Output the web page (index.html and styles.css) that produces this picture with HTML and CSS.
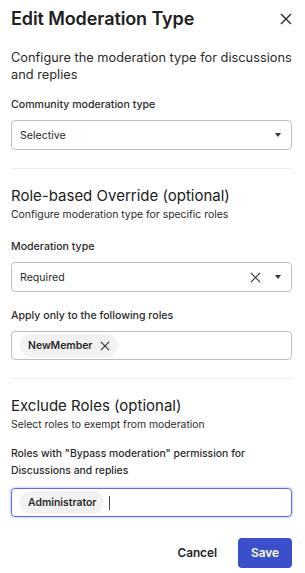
FILE: index.html
```html
<!DOCTYPE html>
<html lang="en">
  <head>
    <meta name="viewport" content="width=device-width, initial-scale=1" />
    <title>Edit Moderation Type</title>
    <link rel="stylesheet" href="styles.css">
  </head>
  <body>
    <div class="dialog">
      <div class="dialog-header">
        <h1 class="dialog-title">Edit Moderation Type</h1>
        <button class="icon-btn close-btn" aria-label="Close">
          <svg width="12" height="12" viewBox="0 0 12 12"><path d="M1 1L11 11M11 1L1 11" stroke="#2a2a2a" stroke-width="1.4" fill="none"/></svg>
        </button>
      </div>

      <p class="dialog-desc">Configure the moderation type for discussions and replies</p>

      <div class="field">
        <label class="field-label">Community moderation type</label>
        <div class="select-box">
          <span class="select-value">Selective</span>
          <span class="caret"></span>
        </div>
      </div>

      <hr class="divider">

      <h2 class="section-title">Role-based Override (optional)</h2>
      <p class="section-desc">Configure moderation type for specific roles</p>

      <div class="field">
        <label class="field-label">Moderation type</label>
        <div class="select-box">
          <span class="select-value">Required</span>
          <svg class="clear-icon" width="11" height="11" viewBox="0 0 12 12"><path d="M1 1L11 11M11 1L1 11" stroke="#333" stroke-width="1.3" fill="none"/></svg>
          <span class="caret"></span>
        </div>
      </div>

      <div class="field">
        <label class="field-label">Apply only to the following roles</label>
        <div class="tag-box">
          <span class="chip">NewMember
            <svg class="chip-x" width="10" height="10" viewBox="0 0 12 12"><path d="M1 1L11 11M11 1L1 11" stroke="#333" stroke-width="1.4" fill="none"/></svg>
          </span>
        </div>
      </div>

      <hr class="divider">

      <h2 class="section-title">Exclude Roles (optional)</h2>
      <p class="section-desc">Select roles to exempt from moderation</p>

      <div class="field field-tight">
        <label class="field-label">Roles with "Bypass moderation" permission for Discussions and replies</label>
        <div class="tag-box focused">
          <span class="chip">Administrator</span>
          <span class="cursor"></span>
        </div>
      </div>

      <div class="dialog-footer">
        <button class="btn btn-text">Cancel</button>
        <button class="btn btn-primary">Save</button>
      </div>
    </div>
  </body>
</html>
```

FILE: styles.css
```css
* {
    box-sizing: border-box;
}
body {
    margin: 0;
    background: #fff;
    font-family: Inter, "Noto Sans", sans-serif;
    color: #222;
}
.dialog {
    padding: 7px 13px 0 11px;
}
.dialog-header {
    display: flex;
    align-items: center;
    justify-content: space-between;
    height: 24px;
}
.dialog-title {
    margin: 0;
    font-size: 18px;
    font-weight: 600;
    line-height: 24px;
    color: #202020;
    letter-spacing: -0.1px;
}
.icon-btn {
    border: 0;
    background: none;
    padding: 0;
    display: flex;
}
.dialog-desc {
    margin: 18px 0 0;
    font-size: 12.8px;
    line-height: 17px;
    color: #2a2a2a;
}
.field {
    margin-top: 14px;
}
.field-label {
    display: block;
    font-size: 10.6px;
    font-weight: 500;
    line-height: 16px;
    color: #2a2a2a;
    margin-bottom: 7px;
}
.select-box {
    display: flex;
    align-items: center;
    height: 30px;
    padding: 0 10px 0 8px;
    border: 1px solid #bdbdbd;
    border-radius: 4px;
    font-size: 10.6px;
    color: #2a2a2a;
}
.select-value {
    flex: 1;
}
.clear-icon {
    margin-right: 14px;
}
.caret {
    width: 0;
    height: 0;
    border-left: 3.5px solid transparent;
    border-right: 3.5px solid transparent;
    border-top: 4px solid #333;
}
.divider {
    border: 0;
    border-top: 1px solid #ececec;
    margin: 18px 0 0;
}
.section-title {
    margin: 16px 0 0;
    font-size: 15px;
    font-weight: 400;
    line-height: 22px;
    color: #202020;
}
.section-desc {
    margin: 0;
    font-size: 10.4px;
    line-height: 16px;
    color: #2a2a2a;
}
.section-desc + .field {
    margin-top: 16px;
}
.field + .field {
    margin-top: 16px;
}
.field-tight .field-label {
    line-height: 17px;
    margin-bottom: 9px;
    font-size: 10.4px;
}
.section-desc + .field-tight {
    margin-top: 12px;
}
.tag-box {
    display: flex;
    align-items: center;
    height: 29px;
    padding: 0 8px;
    border: 1px solid #bdbdbd;
    border-radius: 4px;
}
.tag-box.focused {
    border: 1.5px solid #5b6ee0;
    box-shadow: 0 0 0 1.5px #dfe3fa;
}
.chip {
    display: inline-flex;
    align-items: center;
    gap: 8px;
    height: 23px;
    padding: 0 8px;
    border-radius: 12px;
    background: #f2f2f2;
    font-size: 10.4px;
    font-weight: 600;
    color: #2a2a2a;
}
.cursor {
    width: 1px;
    height: 14px;
    background: #444;
    margin-left: 5px;
}
.dialog-footer {
    display: flex;
    justify-content: flex-end;
    align-items: center;
    gap: 17px;
    margin-top: 21px;
}
.btn {
    font-family: inherit;
    font-size: 11.8px;
    font-weight: 600;
    border: 0;
    height: 30px;
    border-radius: 4px;
    cursor: pointer;
}
.btn-text {
    background: none;
    color: #222;
    padding: 0 4px;
}
.btn-primary {
    background: #3a4fc9;
    color: #fff;
    padding: 0 13px;
}
```
